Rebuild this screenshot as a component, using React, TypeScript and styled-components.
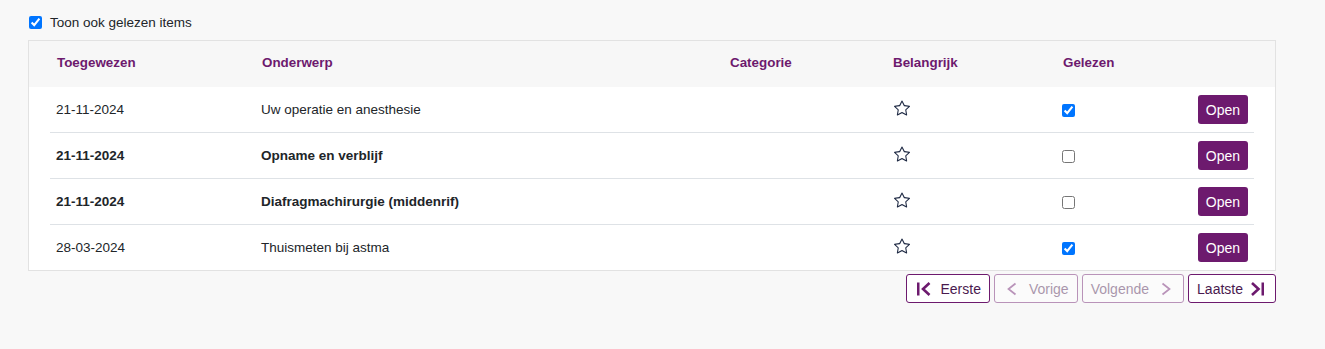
import React from "react";
import styled, { createGlobalStyle } from "styled-components";
import { BsStar } from "react-icons/bs";

const GlobalStyle = createGlobalStyle`
  html, body {
    margin: 0;
    padding: 0;
    background: #f8f8f8;
    font-family: "Liberation Sans", Arial, sans-serif;
    color: #212529;
  }
`;

const Page = styled.div`
  padding: 12px 0 40px 28px;
  width: 1248px;
`;

const CheckRow = styled.label`
  display: flex;
  align-items: center;
  gap: 8px;
  height: 20px;
  padding-left: 1px;
  margin-bottom: 8px;
  font-size: 13.5px;
  color: #212529;
  cursor: pointer;
`;

const Check = styled.input.attrs({ type: "checkbox" })`
  width: 13px;
  height: 13px;
  margin: 0;
`;

const Card = styled.div`
  background: #ffffff;
  border: 1px solid #e2e2e2;
`;

const Grid = styled.div`
  display: grid;
  grid-template-columns: 205px 468px 163px 170px 1fr auto;
  align-items: center;
`;

const HeaderRow = styled(Grid)`
  background: #f7f7f7;
  height: 46px;
  padding: 0 21px 3px 21px;
  box-sizing: border-box;
`;

const HeadCell = styled.div`
  padding-left: 7px;
  font-size: 13.4px;
  font-weight: bold;
  color: #6d1a6e;
`;

const Body = styled.div`
  padding: 0 21px;
`;

const Row = styled(Grid)`
  height: 46px;
  box-sizing: border-box;
  border-bottom: 1px solid #dee2e6;
  &:last-child {
    border-bottom: none;
    height: 45px;
  }
`;

const Cell = styled.div<{ $bold?: boolean }>`
  padding-left: 6px;
  font-size: 13.5px;
  font-weight: ${(p) => (p.$bold ? "bold" : "normal")};
  color: #212529;
`;

const StarCell = styled.div`
  padding-left: 8px;
  display: flex;
  align-items: center;
  margin-bottom: 4px;
  color: #1f2a44;
`;

const CheckCell = styled.div`
  padding-left: 6px;
  display: flex;
  align-items: center;
  padding-top: 1px;
`;

const ActionCell = styled.div`
  padding-right: 6px;
  display: flex;
  justify-content: flex-end;
`;

const OpenButton = styled.button`
  height: 29px;
  padding: 0 8px;
  border: none;
  border-radius: 3px;
  background: #6d1a6e;
  color: #ffffff;
  font-family: "Liberation Sans", Arial, sans-serif;
  font-size: 14px;
  cursor: pointer;
`;

const Pager = styled.div`
  display: flex;
  justify-content: flex-end;
  gap: 4px;
  margin-top: 3px;
`;

const PageButton = styled.button<{ $disabled?: boolean; $gap?: number }>`
  display: inline-flex;
  align-items: center;
  gap: ${(p) => p.$gap ?? 10}px;
  height: 29px;
  padding: 0 8px;
  background: #ffffff;
  border: 1px solid #6d1a6e;
  border-radius: 3px;
  font-family: "Liberation Sans", Arial, sans-serif;
  font-size: 14px;
  color: #4a1a4f;
  opacity: ${(p) => (p.$disabled ? 0.45 : 1)};
  cursor: ${(p) => (p.$disabled ? "default" : "pointer")};
  svg {
    flex: none;
    color: #6d1a6e;
  }
`;

const FirstIcon = () => (
  <svg width="16" height="16" viewBox="0 0 16 16" fill="none">
    <rect x="2" y="1.5" width="2.5" height="13" fill="currentColor" />
    <polyline points="14.5,2 8,8 14.5,14" stroke="currentColor" strokeWidth="2.6" />
  </svg>
);

const LastIcon = () => (
  <svg width="16" height="16" viewBox="0 0 16 16" fill="none">
    <polyline points="1,2 7.5,8 1,14" stroke="currentColor" strokeWidth="2.6" />
    <rect x="10.5" y="1.5" width="2.5" height="13" fill="currentColor" />
  </svg>
);

const PrevIcon = () => (
  <svg width="16" height="16" viewBox="0 0 16 16" fill="none">
    <polyline points="12.5,2.5 5.5,8 12.5,13.5" stroke="currentColor" strokeWidth="1.7" />
  </svg>
);

const NextIcon = () => (
  <svg width="16" height="16" viewBox="0 0 16 16" fill="none">
    <polyline points="3.5,2.5 10.5,8 3.5,13.5" stroke="currentColor" strokeWidth="1.7" />
  </svg>
);

type Item = { date: string; subject: string; bold: boolean; read: boolean };

const items: Item[] = [
  { date: "21-11-2024", subject: "Uw operatie en anesthesie", bold: false, read: true },
  { date: "21-11-2024", subject: "Opname en verblijf", bold: true, read: false },
  { date: "21-11-2024", subject: "Diafragmachirurgie (middenrif)", bold: true, read: false },
  { date: "28-03-2024", subject: "Thuismeten bij astma", bold: false, read: true },
];

export default function App() {
  return (
    <>
      <GlobalStyle />
      <Page>
        <CheckRow>
          <Check defaultChecked />
          Toon ook gelezen items
        </CheckRow>
        <Card>
          <HeaderRow>
            <HeadCell>Toegewezen</HeadCell>
            <HeadCell>Onderwerp</HeadCell>
            <HeadCell>Categorie</HeadCell>
            <HeadCell>Belangrijk</HeadCell>
            <HeadCell>Gelezen</HeadCell>
            <HeadCell />
          </HeaderRow>
          <Body>
            {items.map((it, i) => (
              <Row key={i}>
                <Cell $bold={it.bold}>{it.date}</Cell>
                <Cell $bold={it.bold}>{it.subject}</Cell>
                <Cell />
                <StarCell>
                  <BsStar size={16} />
                </StarCell>
                <CheckCell>
                  <Check defaultChecked={it.read} />
                </CheckCell>
                <ActionCell>
                  <OpenButton>Open</OpenButton>
                </ActionCell>
              </Row>
            ))}
          </Body>
        </Card>
        <Pager>
          <PageButton $gap={9}>
            <FirstIcon />
            Eerste
          </PageButton>
          <PageButton $disabled $gap={10}>
            <PrevIcon />
            Vorige
          </PageButton>
          <PageButton $disabled $gap={10}>
            Volgende
            <NextIcon />
          </PageButton>
          <PageButton $gap={8}>
            Laatste
            <LastIcon />
          </PageButton>
        </Pager>
      </Page>
    </>
  );
}
